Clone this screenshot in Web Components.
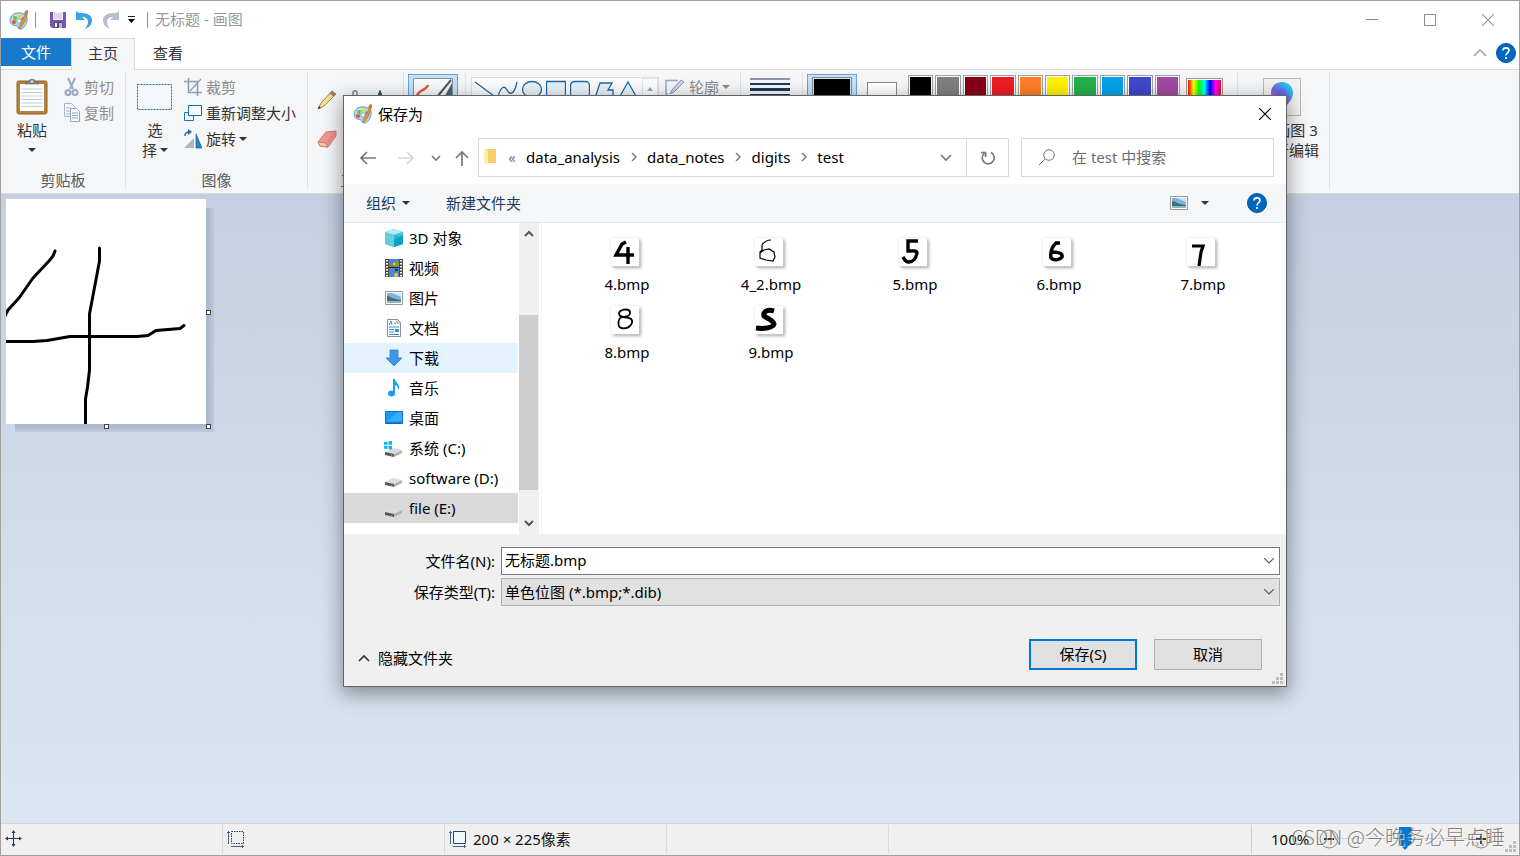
<!DOCTYPE html>
<html lang="zh-CN">
<head>
<meta charset="utf-8">
<title>无标题 - 画图</title>
<style>
  html, body { margin: 0; height: 100%; }
  body { font: 15px/20px "Noto Sans", "Noto Sans CJK SC", sans-serif; color: #000; overflow: hidden; }
</style>
</head>
<body>
<paint-app></paint-app>
<script>
const RESET = `
  *, *::before, *::after { box-sizing: border-box; }
  button, input, select { font: inherit; color: inherit; margin: 0; }
  button { background: none; border: 0; padding: 0; display: flex; align-items: center; justify-content: center; }
  a { color: inherit; text-decoration: none; }
`;
function define(name, css, html, setup) {
  const tpl = document.createElement('template');
  tpl.innerHTML = `<style>${RESET}${css}</style>${html}`;
  customElements.define(name, class extends HTMLElement {
    constructor() {
      super();
      this.attachShadow({ mode: 'open' }).append(tpl.content.cloneNode(true));
    }
    connectedCallback() { if (setup) setup(this, this.shadowRoot); }
  });
}

const S = (w, h, body) => `<svg width="${w}" height="${h}" viewBox="0 0 ${w} ${h}" fill="none" aria-hidden="true">${body}</svg>`;
const stroke = (d, c, w, extra = '') => `<path d="${d}" stroke="${c}" stroke-width="${w}" ${extra}/>`;
const thumb = body => S(28, 28, body);
const drive = extra => S(20, 20, `<path d="M1 14 9 10l9 2-8 4z" fill="#dcdcde"/><path d="M1 14l9 2v3L1 17z" fill="#55575a"/><path d="M10 16 18 12v3l-8 4z" fill="#aeb0b3"/><path d="M7 17h1.500v1H7z" fill="#3ad13a"/>${extra}`);

const ICONS = {
  palette: S(20, 20, `<path d="M1 11C1 5 6 2 12 3c5 1 7 4 6 8-1 5-4 8-7 8-2 0-2-2-3-3-2-1-6 0-7-5z" fill="#a9d4ea" stroke="#6b9fc0"/>
    <path d="M3 10c1-4 5-6 9-5" stroke="#e4f4fb"/><circle cx="5" cy="12" r="2" fill="#e2553b"/><circle cx="6" cy="8" r="2" fill="#6fbf47"/><circle cx="10" cy="6" r="2" fill="#f4d13b"/><circle cx="10" cy="11" r="2" fill="#f4fafc" stroke="#6b9fc0" stroke-width=".6"/><circle cx="14" cy="9" r="1.500" fill="#4078c8"/>
    <path d="M10 19c0-3 2-7 6-14l2 1c-3 7-5 11-8 13z" fill="#ed9332" stroke="#b8661b" stroke-width=".6"/><path d="M15 4c0-2 2-4 3-4 2 1 1 4 0 6z" fill="#b9845a"/>`),
  save: S(16, 16, `<path d="M0 0h16v16H2l-2-2z" fill="#7a54b8"/><path d="M3 0h10v8H3z" fill="#f1eef8"/><path d="M4 2h8M4 4h8M4 6h8" stroke="#c8bfde"/><path d="M4 10h8v6H4z" fill="#4d4d66"/><path d="M5 11h2v4H5z" fill="#fff"/><path d="M9 11h3v5H9z" fill="#b9b3cc"/>`),
  undo: S(18, 18, `<path d="M1 0v9h9L7 6c4 0 6 2 6 5 0 2-1 4-3 7 5-2 7-5 7-9 0-4-4-7-10-7H4z" fill="#36a5e4"/>`),
  redo: S(18, 18, `<path d="M17 0v9H8l3-3c-4 0-6 2-6 5 0 2 1 4 3 7-5-2-7-5-7-9 0-4 4-7 10-7h3z" fill="#b3bfd3"/>`),
  qat: S(7, 7, `<path d="M0 .500h7" stroke="#222"/><path d="M0 3h7L3.500 7z" fill="#000"/>`),
  min: S(12, 12, stroke('M0 5.500h12', '#8c8c8c', 1)),
  max: S(12, 12, `<path d="M.500.500h11v11H.500z" stroke="#8c8c8c"/>`),
  close: S(12, 12, stroke('M0 0l12 12M12 0 0 12', 'currentColor', 1.2)),
  up: S(14, 8, stroke('M1 7l6-6 6 6', '#9a9a9a', 1.4)),
  help: S(20, 20, `<circle cx="10" cy="10" r="9.500" fill="#0067c5" stroke="#0a4f92"/><path d="M7 7.500C7 4 13 4 13 7.500c0 2-3 2.200-3 5M10 14v2" stroke="#fff" stroke-width="1.700"/>`),
  caret: S(8, 4, `<path d="M0 0h8L4 4z" fill="currentColor"/>`),
  paste: S(32, 36, `<rect x="1" y="2" width="30" height="33" rx="2" fill="#b98039" stroke="#8f5f27"/><path d="M4 5h24v27H4z" fill="#fff"/><path d="M5 10h22M5 13.500h22M5 17h22M5 20.500h22M5 24h22M5 27.500h22" stroke="#b9cfe2"/><path d="M9 5c0-2 4-1 4-3 1-3 5-3 6 0 0 2 4 1 4 3z" fill="#8b8e92" stroke="#606266" stroke-width=".7"/><circle cx="16" cy="2.500" r="1" fill="#fff"/>`),
  cut: S(16, 20, `<path d="M4 1l5 11M11 1 6 12" stroke="#9aa9bf" stroke-width="2"/><circle cx="4" cy="15.500" r="2.500" stroke="#9aa9bf" stroke-width="2"/><circle cx="11" cy="15.500" r="2.500" stroke="#9aa9bf" stroke-width="2"/>`),
  copy: S(16, 20, `<path d="M.500.500h7l3 3v10H.500z" fill="#f3f6fa" stroke="#a3b2c8"/><path d="M2 5h5M2 8h5M2 11h4" stroke="#a3b2c8"/><path d="M6.500 5.500h6l3 3v10h-9z" fill="#f3f6fa" stroke="#93a5bf"/><path d="M8 10h6M8 12.500h6M8 15h6" stroke="#93a5bf"/>`),
  select: S(36, 36, `<rect x=".5" y="5.500" width="34" height="25" fill="#f3f6fa" stroke="#1f6aa5" stroke-dasharray="2 1"/>`),
  crop: S(18, 20, `<path d="M4.500 1v14.500H18M0 4.500h13.500V19" stroke="#8f9db5" stroke-width="1.600"/><path d="M6 14 17 2" stroke="#8f9db5" stroke-width="1.300"/>`),
  resize: S(18, 18, `<path d="M.500 8.500h9v8h-9z" fill="#eaf4fb" stroke="#2273ae"/><path d="M4.500 1.500h13v10h-13z" fill="#f2f8fc" stroke="#1a6aa8"/>`),
  rotate: S(18, 20, `<path d="M0 19h10V9z" fill="#b4b6b8"/><path d="M12 5l6 14h-6z" fill="#2a83c0" stroke="#1f6394" stroke-width=".7"/><path d="M1 7c0-3 2-4 4-4" stroke="#1c6fb4" stroke-width="1.500"/><path d="M4 0l4 3-4 3z" fill="#1c6fb4"/>`),
  pencil: S(20, 20, `<path d="M1 19l3-6L15 1l4 3L7 16z" fill="#f7e08e" stroke="#77694a" stroke-width=".8"/><path d="M15 1l4 3-2 2-4-3z" fill="#d86262"/><path d="M13 3l4 3" stroke="#5f9b76" stroke-width="1.500"/><path d="M1 19l1-3 2 2z" fill="#333"/>`),
  eraser: S(20, 18, `<path d="M1 12 9 2l10-1v5l-8 11-8-1z" fill="#f0958f" stroke="#d87a73"/><path d="M1 12l8 1 2 4-8-1z" fill="#f8c4ae" stroke="#c7846f"/><path d="M9 13 19 2" stroke="#e0837c"/>`),
  fill: S(16, 20, `<path d="M8 9V3c0-3 4-3 4 0v8" stroke="#7d8896" stroke-width="1.500"/><path d="M1 14 9 6l6 7-7 6z" fill="#d7e2ed" stroke="#6f7f92"/>`),
  textTool: S(14, 18, `<path d="M1 17 7 2l6 15M3 12h8" stroke="#234b77" stroke-width="2"/>`),
  brush: S(40, 40, `<path d="M.500.500h39v39H.500z" fill="#f6fafc" stroke="#8a8f94"/><path d="M39 5v34H20z" fill="#2e4566" opacity=".85"/><path d="M3 24C3 10 13 14 15 7" stroke="#e0592b" stroke-width="2.500"/><path d="M38 2 24 19" stroke="#555" stroke-width="2"/>`),
  line: S(20, 20, stroke('M1 2l19 14', '#1f6aa5', 1.3)),
  curve: S(20, 20, stroke('M0 17C3 5 7 6 9 10s7 7 10-8', '#1f6aa5', 1.3)),
  ellipse: S(20, 20, `<ellipse cx="10" cy="9.500" rx="9.500" ry="8" fill="#e6f1f8" stroke="#1f6aa5" stroke-width="1.300"/>`),
  rect: S(20, 20, `<path d="M.500 1.500h19v16H.500z" fill="#e6f1f8" stroke="#1f6aa5" stroke-width="1.300"/>`),
  rrect: S(20, 20, `<rect x=".5" y="1.500" width="19" height="16" rx="4" fill="#e6f1f8" stroke="#1f6aa5" stroke-width="1.300"/>`),
  poly: S(20, 20, `<path d="M1 18 6 3h12l-4 7h5v8z" fill="#e6f1f8" stroke="#1f6aa5" stroke-width="1.300"/>`),
  tri: S(20, 20, `<path d="M1 18 10 2l9 16z" fill="#e6f1f8" stroke="#1f6aa5" stroke-width="1.300"/>`),
  triUp: S(6, 4, `<path d="M0 4h6L3 0z" fill="#a5a5a5"/>`),
  outline: S(20, 18, `<path d="M1 17V2.500h12M1 16h2" stroke="#98a8c2" stroke-width="1.500"/><path d="M5 16 7 12 16 2l3 2L9 14z" fill="#c9d5e8" stroke="#8497b7"/>`),
  sizes: S(40, 26, `<path d="M0 1h40" stroke="#1e395b"/><path d="M0 6h40" stroke="#1e395b" stroke-width="2"/><path d="M0 11.500h40" stroke="#1e395b" stroke-width="3"/><path d="M0 18h40" stroke="#1e395b" stroke-width="4"/>`),
  balloon: S(24, 30, `<defs><linearGradient id="b" x1="0" y1="1" x2=".8" y2="0"><stop offset="0" stop-color="#f05ac0"/><stop offset=".5" stop-color="#7a5be0"/><stop offset="1" stop-color="#19d8f2"/></linearGradient></defs><path d="M12 1c7 0 11 5 11 11 0 7-5 9-8 16h-5C8 22 1 19 1 12 1 6 5 1 12 1z" fill="url(#b)"/><circle cx="12" cy="12" r="5" fill="#4b5ad8" opacity=".3"/>`),
  back: S(16, 14, stroke('M16 7H1M7 1 1 7l6 6', '#777', 1.7)),
  forward: S(16, 14, stroke('M0 7h15M9 1l6 6-6 6', '#d6d6d6', 1.7)),
  down: S(10, 6, stroke('M1 1l4 4 4-4', '#777', 1.7)),
  upArrow: S(14, 16, stroke('M7 16V2M1 8l6-6 6 6', '#777', 1.7)),
  chev: S(6, 10, stroke('M1 1l4 4-4 4', '#777', 1.4)),
  bigDown: S(12, 8, stroke('M1 1l5 5 5-5', '#777', 1.7)),
  thinDown: S(10, 6, stroke('M0 0l5 5 5-5', '#555', 1.1)),
  refresh: S(16, 16, stroke('M11 2.500A6 6 0 1 1 4 3.500M1 2.500h4.500V7', '#777', 1.7)),
  search: S(16, 16, `<circle cx="10" cy="6" r="5.300" stroke="#777"/><path d="M6 10l-6 6" stroke="#777"/>`),
  folder: S(12, 18, `<path d="M0 1h3v16l-3-2z" fill="#fbe7a2"/><path d="M3 1h9v14H3z" fill="#f7cf68"/><path d="M0 2l4 1v14l-4-2z" fill="#fdeeb6"/>`),
  picture: S(20, 20, `<path d="M1.500 3.500h17v13h-17z" fill="#fff" stroke="#979797"/><path d="M3 5h14v10H3z" fill="#7bb3ea"/><path d="M8 5h9v4z" fill="#cfe4f8"/><path d="M3 8c3 0 5 3 14 4v3H3z" fill="#47705e"/><path d="M3 13h14v2H3z" fill="#8fb5cc"/>`),
  cube: S(20, 20, `<path d="M10 1l9 3v12l-9 3-9-3V4z" fill="#29b6d6"/><path d="M1 4l9 3v12l-9-3z" fill="#63cde0"/><path d="M1 4l9-3 9 3-9 3z" fill="#b5ebf3"/><path d="M10 7l9-3v6z" fill="#3fc4dc"/><path d="M10 12l9-5v9l-9 3z" fill="#0ca0c4"/>`),
  video: S(20, 20, `<path d="M1 1h18v18H1z" fill="#4a4a4a"/><path d="M5 1h10v18H5z" fill="#4a86d8"/><path d="M5 9.500h10" stroke="#222"/><path d="M3 2v17M17 2v17" stroke="#fff" stroke-width="2" stroke-dasharray="1.500 1.500"/><circle cx="12" cy="6" r="3" fill="#8a9d2f"/><path d="M6 7h3v2H6z" fill="#e0572d"/><path d="M9 5h2v2H9z" fill="#f3d13b"/><circle cx="12" cy="17" r="2" fill="#f3c52e"/><path d="M11 11h3v2h-3z" fill="#273a33"/>`),
  doc: S(20, 20, `<path d="M3.500 1.500h10l3 3v14h-13z" fill="#fff" stroke="#8b8f93"/><path d="M13 1v4h4" stroke="#8b8f93"/><path d="M5 7l2-4 1 4M10 5h2M5 9h10M5 11.500h5M5 14h5M5 16.500h10" stroke="#2f8fcb"/><path d="M11 11h4v3h-4z" fill="#4b93b6"/>`),
  download: S(20, 20, `<path d="M6 2h8v8h4l-8 8-8-8h4z" fill="#3c9ae8" stroke="#2f7fca" stroke-width=".8"/>`),
  music: S(20, 20, `<ellipse cx="7.500" cy="15.500" rx="3.500" ry="3" fill="#1a9cf0"/><path d="M9 16V1h2c0 4 5 4 4 10h-1c0-3-2-4-3-4v9z" fill="#1a9cf0"/>`),
  desktop: S(20, 20, `<path d="M1.500 3.500h17v12h-17z" fill="#149bfb" stroke="#0a6fc2"/><path d="M2 14 14 4h4v9H9z" fill="#46b3ff" opacity=".7"/><path d="M2 15h16" stroke="#0c5c9e" stroke-dasharray="3 1"/>`),
  sys: drive('<path d="M0 4l3.500-.500v3.300H0zM4.500 3.300 8 3v3.800H4.500zM0 7.800h3.500V11L0 10.500zM4.500 7.800H8v3.700l-3.500-.300z" fill="#11b5ee"/>'),
  drive: drive(''),
  sbUp: S(10, 8, stroke('M1 6l4-4 4 4', '#555', 2)),
  sbDown: S(10, 8, stroke('M1 2l4 4 4-4', '#555', 2)),
  hide: S(12, 8, stroke('M1 7l5-5 5 5', '#333', 1.7)),
  grip: S(12, 12, `<path d="M8 0h3v3H8zM4 4h3v3H4zM8 4h3v3H8zM0 8h3v3H0zM4 8h3v3H4zM8 8h3v3H8z" fill="#bdbdbd"/>`),
  move: S(18, 18, `<path d="M8.500 2v13M2 8.500h13" stroke="#1e395b"/><path d="M8.500 0l2 3h-4zM8.500 17l2-3h-4zM0 8.500l3-2v4zM17 8.500l-3-2v4z" fill="#1e395b"/>`),
  selSize: S(18, 18, `<path d="M4.500 1.500h12v12h-12z" stroke="#1e395b" stroke-dasharray="1.500 1"/><path d="M1.500 1v13M4 16.500h13M0 2.500h3M15.500 15v3" stroke="#48617f"/>`),
  imgSize: S(18, 18, `<path d="M4.500 1.500h12v12h-12z" fill="#eef8fb" stroke="#1e4a77"/><path d="M1.500 1v13M4 16.500h13M0 2.500h3M15.500 15v3" stroke="#48617f"/>`),
  minus: S(20, 20, `<circle cx="10" cy="10" r="9" fill="#e9e9e9" stroke="#8b8b8b"/><path d="M5 10h10" stroke="#333" stroke-width="2"/>`),
  plus: S(20, 20, `<circle cx="10" cy="10" r="9" fill="#e9e9e9" stroke="#8b8b8b"/><path d="M5 10h10M10 5v10" stroke="#333" stroke-width="2"/>`),
  t4: thumb(stroke('M15 4 11 6 5 17h18M17 9v17', '#000', 3.4)),
  t42: thumb(stroke('M16 2c-4 0-7 2-9 5v5l-2 2v6l6 2 7 1 2-4-1-5-5-3-5 1-4 3', '#000', 1.2)),
  t5: thumb(stroke('M19 3H9v10c3 0 9-1 9 2-1 5-4 9-8 9-4 0-4-2-6-5', '#000', 3.4)),
  t6: thumb(stroke('M17 5h-4c-4 4-6 9-5 15 3 3 9 2 11-1 1-4-4-5-11-5', '#000', 3.4)),
  t7: thumb(stroke('M5 8h11l-2 6-2 14', '#000', 3.2)),
  t8: thumb(stroke('M8 8c0-5 10-6 11-2 1 6-10 6-11 2M11 11c-4 1-5 9-1 11 9 2 13-6 10-9-3-2-6-2-9-2', '#000', 1.8)),
  t9: thumb(stroke('M19 5C12 3 8 6 9 10c4 3 9 4 10 8-1 4-10 5-18 4', '#000', 5)),
};
define('ui-icon', ':host{display:block;flex:none} svg{display:block}', '<span></span>', (el, root) => {
  root.querySelector('span').innerHTML = ICONS[el.getAttribute('name')];
});

define('title-bar', `
  :host { display: flex; align-items: center; height: 37px; background: #fff; color: #999; padding: 0 2px 0 8px; }
  .quick { display: flex; align-items: center; flex: 1; }
  .sep { width: 1px; height: 16px; background: #8f8f8f; }
  .s1 { margin: 0 14px 0 6px; } .s2 { margin: 0 7px 0 12px; }
  .undo { margin: 0 9px; }
  .qat { margin-left: 8px; }
  .win { width: 58px; height: 36px; }
  h1 { font: inherit; margin: 0; padding-bottom: 2px; }
`, `<div class="quick"><ui-icon name="palette"></ui-icon><i class="sep s1"></i>
  <button aria-label="保存"><ui-icon name="save"></ui-icon></button>
  <button class="undo" aria-label="撤消"><ui-icon name="undo"></ui-icon></button>
  <button aria-label="重做"><ui-icon name="redo"></ui-icon></button>
  <button class="qat" aria-label="自定义"><ui-icon name="qat"></ui-icon></button><i class="sep s2"></i><h1>无标题 - 画图</h1></div>
  <button class="win" aria-label="最小化"><ui-icon name="min"></ui-icon></button>
  <button class="win" aria-label="最大化"><ui-icon name="max"></ui-icon></button>
  <button class="win" aria-label="关闭"><ui-icon name="close"></ui-icon></button>`);

define('ribbon-tabs', `
  :host { display: flex; height: 32px; background: #fff; border-bottom: 1px solid #dadbdc; color: #333; }
  .file { width: 70px; height: 28px; background: #1979ca; color: #fff; }
  .tab { width: 66px; height: 30px; }
  .on { width: 64px; height: 32px; background: #f5f6f7; border: 1px solid #dadbdc; border-bottom: 0; padding-bottom: 4px; }
  .end { margin-left: auto; display: flex; align-items: center; gap: 9px; padding: 0 3px 2px 0; }
`, `<button class="file">文件</button><button class="tab on">主页</button><button class="tab">查看</button>
  <div class="end"><button aria-label="折叠功能区"><ui-icon name="up"></ui-icon></button><button aria-label="帮助"><ui-icon name="help"></ui-icon></button></div>`);

define('ribbon-group', `
  :host { display: flex; flex-direction: column; flex: none; height: 118px; border-right: 1px solid #e2e3e4; margin-top: 2px; }
  .body { display: flex; flex: 1; }
  .label { text-align: center; color: #5a5a5a; height: 20px; }
`, `<div class="body"><slot></slot></div><div class="label"></div>`, (el, root) => {
  root.querySelector('.label').textContent = el.getAttribute('label') || '';
});

define('tool-button', `
  :host { display: block; color: #333; }
  button { height: 26px; gap: 4px; justify-content: flex-start; white-space: nowrap; }
  :host([disabled]) button { color: #8d8d8d; }
  :host([big]) button { flex-direction: column; height: auto; gap: 0; padding-top: 7px; width: 100%; }
  :host([big]) ui-icon { margin-bottom: 5px; }
`, `<button><slot></slot></button>`, (el, root) => {
  const icon = document.createElement('ui-icon');
  icon.setAttribute('name', el.getAttribute('icon'));
  const button = root.querySelector('button');
  button.prepend(icon);
  button.disabled = el.hasAttribute('disabled');
});

define('color-swatch', `
  :host { display: block; }
  button { width: 100%; height: 25px; border: 1px solid #a0a0a0; padding: 1px; background: #fff; }
  i { flex: 1; height: 100%; background: var(--swatch); }
`, `<button aria-label="颜色"><i></i></button>`, (el) => {
  el.style.setProperty('--swatch', el.getAttribute('color'));
});

define('paint-ribbon', `
  :host { display: flex; height: 124px; background: #f5f6f7; border-bottom: 1px solid #dadbdc; overflow: hidden; }
  .clip { width: 125px; } .image { width: 182px; } .tools { width: 96px; } .brushes, .size { width: 62px; }
  .shapes { width: 275px; } .colors { width: 435px; } .p3d { width: 92px; }
  .paste { width: 46px; margin: 0 9px 0 8px; }
  .select { width: 58px; }
  .col { padding-top: 2px; display: flex; flex-direction: column; align-items: flex-start; }
  .row { display: flex; align-items: center; height: 20px; gap: 3px; }
  .drop { height: 20px; display: flex; align-items: center; }
  .grid { display: grid; grid-template-columns: 20px 20px 20px; gap: 20px 8px; padding: 18px 0 0 9px; align-content: start; }
  .brush { width: 50px; height: 90px; margin: 2px 4px; border: 1px solid #62a2e4; background: #c9e0f7; align-items: flex-start; padding-top: 3px; }
  .gallery { display: flex; gap: 4px; margin: 5px 0 0 5px; border: 1px solid #dcdddf; height: 74px; padding: 2px; background: #fafbfc; width: 188px; flex: none; }
  .scroll { width: 17px; height: 22px; margin: -2px -2px 0 auto; border: 1px solid #e4e5e7; }
  .outline { margin-left: 6px; padding-top: 2px; }
  .lines { margin: 6px 0 0 9px; align-items: flex-start; height: 40px; }
  .c1 { width: 50px; height: 90px; margin: 2px 0 0 4px; border: 1px solid #62a2e4; background: #c9e0f7; align-items: flex-start; padding-top: 2px; }
  .c1 i { width: 40px; height: 40px; background: #000; border: 1px solid #8a8a8a; box-shadow: inset 0 0 0 1px #c9e0f7; }
  .c2 { width: 30px; height: 30px; margin: 10px 0 0 10px; border: 1px solid #8a8a8a; background: #fff; }
  .swatches { display: grid; grid-template-columns: repeat(10, 1fr); gap: 2px; width: 272px; margin: 3px 6px 0 11px; align-content: start; }
  .rainbow { width: 37px; height: 36px; margin: 6px 0 0; border: 1px solid #999; padding: 1px; background: #fff; }
  .rainbow i { flex: 1; height: 100%; background: linear-gradient(90deg, #f00, #ff0, #0f0, #0ff, #00f, #f0f, #f03); }
  .b3 { flex: 1; flex-direction: column; justify-content: flex-start; align-items: center; padding: 6px 8px 0 4px; color: #333; white-space: nowrap; }
  .box { border: 1px solid #b8b8b8; width: 38px; height: 38px; display: grid; place-items: start center; padding: 2px; margin-bottom: 4px; background: #f2f2f2; }
`, `
  <ribbon-group class="clip" label="剪贴板">
    <tool-button big class="paste" icon="paste"><span>粘贴</span><span class="drop"><ui-icon name="caret"></ui-icon></span></tool-button>
    <div class="col"><tool-button icon="cut" disabled>剪切</tool-button><tool-button icon="copy" disabled>复制</tool-button></div>
  </ribbon-group>
  <ribbon-group class="image" label="图像">
    <tool-button big class="select" icon="select"><span>选</span><span class="row">择<ui-icon name="caret"></ui-icon></span></tool-button>
    <div class="col"><tool-button icon="crop" disabled>裁剪</tool-button><tool-button icon="resize">重新调整大小</tool-button><tool-button icon="rotate"><span class="row">旋转<ui-icon name="caret"></ui-icon></span></tool-button></div>
  </ribbon-group>
  <ribbon-group class="tools" label="工具"><div class="grid">
    <ui-icon name="pencil"></ui-icon><ui-icon name="fill"></ui-icon><ui-icon name="textTool"></ui-icon><ui-icon name="eraser"></ui-icon></div></ribbon-group>
  <ribbon-group class="brushes"><button class="brush" aria-label="刷子"><ui-icon name="brush"></ui-icon></button></ribbon-group>
  <ribbon-group class="shapes">
    <div class="gallery"><ui-icon name="line"></ui-icon><ui-icon name="curve"></ui-icon><ui-icon name="ellipse"></ui-icon><ui-icon name="rect"></ui-icon><ui-icon name="rrect"></ui-icon><ui-icon name="poly"></ui-icon><ui-icon name="tri"></ui-icon>
    <button class="scroll" aria-label="向上"><ui-icon name="triUp"></ui-icon></button></div>
    <tool-button class="outline" icon="outline" disabled><span class="row">轮廓<ui-icon name="caret"></ui-icon></span></tool-button>
  </ribbon-group>
  <ribbon-group class="size"><button class="lines" aria-label="粗细"><ui-icon name="sizes"></ui-icon></button></ribbon-group>
  <ribbon-group class="colors">
    <button class="c1" aria-label="颜色 1"><i></i></button><button class="c2" aria-label="颜色 2"></button>
    <div class="swatches">${['#000','#7f7f7f','#880015','#ed1c24','#ff7f27','#fff200','#22b14c','#00a2e8','#3f48cc','#a349a4'].map(c => `<color-swatch color="${c}"></color-swatch>`).join('')}</div>
    <button class="rainbow" aria-label="编辑颜色"><i></i></button>
  </ribbon-group>
  <ribbon-group class="p3d"><button class="b3"><span class="box"><ui-icon name="balloon"></ui-icon></span><span>使用画图 3</span><span>D 重新编辑</span></button></ribbon-group>`);

define('paint-canvas', `
  :host { display: block; flex: 1; min-height: 0; padding: 5px; background: linear-gradient(#c5cfe1, #dce6f2); }
  .stage { position: relative; z-index: 0; width: 200px; height: 225px; }
  .stage::before { content: ""; position: absolute; z-index: -1; inset: 9px -8px -8px 9px; background: #abb9cd; box-shadow: inset -3px -3px 4px #c0cbdd; }
  i { position: absolute; width: 5px; height: 5px; background: #fff; border: 1px solid #444; }
  .e { left: 200px; top: 111px; } .s { left: 98px; top: 225px; } .se { left: 200px; top: 225px; }
  svg { display: block; background: #fff; }
`, `<div class="stage"><svg width="200" height="225" viewBox="0 0 200 225" fill="none" stroke="#000" stroke-width="3" stroke-linecap="round" stroke-linejoin="round">
    <path d="M49 52l-2 5-4 5-16 17-14 20-11 12-3 6"/><path d="M93.500 49v13L83.500 115v56l-2 17-2 12v27"/><path d="M-2 142.500h29l14-1 23-4h67l11-1 8-5 24-2 4-3"/></svg>
    <i class="e"></i><i class="s"></i><i class="se"></i></div>`);

define('status-bar', `
  :host { display: flex; align-items: stretch; height: 32px; background: #f0f0f0; border-top: 1px solid #d5d5d5; color: #111; position: relative; }
  .cell { width: 222px; border-right: 1px solid #dadada; display: flex; align-items: center; gap: 6px; padding: 0 5px 2px 4px; margin: 1px 0; }
  .spacer { flex: 1; border-right: 1px solid #d0d0d0; margin: 1px 0; }
  .zoom { width: 267px; display: flex; align-items: center; padding: 0 0 2px 19px; }
  .zoom output { width: 48px; }
  input { appearance: none; width: 132px; height: 24px; background: linear-gradient(#d2d2d2, #d2d2d2) center / 100% 1px no-repeat; }
  input::-webkit-slider-thumb { appearance: none; width: 13px; height: 23px; background: #0078d7; clip-path: polygon(0 0, 100% 0, 100% 70%, 50% 100%, 0 70%); }
  .grip { position: absolute; right: 2px; bottom: 2px; }
  .mark { position: absolute; right: 14px; bottom: 4px; font: 20px/28px "Noto Sans CJK SC", sans-serif; font-weight: 300; color: rgba(110,110,110,.85); text-shadow: 1px 1px 0 rgba(255,255,255,.6); white-space: nowrap; }
`, `<div class="cell"><ui-icon name="move"></ui-icon></div>
  <div class="cell"><ui-icon name="selSize"></ui-icon></div>
  <div class="cell"><ui-icon name="imgSize"></ui-icon><span>200 × 225像素</span></div>
  <div class="cell"></div><div class="spacer"></div>
  <div class="zoom"><output>100%</output><button aria-label="缩小"><ui-icon name="minus"></ui-icon></button><input type="range" aria-label="缩放" value="50"><button aria-label="放大"><ui-icon name="plus"></ui-icon></button></div>
  <ui-icon class="grip" name="grip"></ui-icon><div class="mark">CSDN @今晚务必早点睡</div>`);

define('nav-item', `
  :host { display: block; }
  a { display: flex; align-items: center; gap: 5px; height: 30px; padding-left: 40px; white-space: nowrap; }
  :host([hover]) a { background: #e5f3ff; } :host([selected]) a { background: #d9d9d9; }
`, `<a href="#"><slot name="icon"></slot><slot></slot></a>`);

define('file-item', `
  :host { display: flex; flex-direction: column; align-items: center; height: 57px; }
  .pic { width: 28px; height: 28px; margin: 0 4px 8px 0; background: #fff; box-shadow: 0 0 2px #e4e4e4, 2px 2px 3px #aaa; }
`, `<div class="pic"><slot name="thumb"></slot></div><slot></slot>`);

define('address-bar', `
  :host { display: flex; flex: 1; height: 39px; border: 1px solid #d9d9d9; background: #fff; }
  nav { display: flex; align-items: center; flex: 1; padding: 0 0 2px 5px; }
  .more { width: 30px; text-align: center; color: #777; padding-left: 2px; }
  nav button { width: 27px; height: 35px; }
  .drop { width: 40px; } .re { width: 42px; border-left: 1px solid #d9d9d9; }
`, `<nav aria-label="路径"><ui-icon name="folder"></ui-icon><span class="more">«</span>
  <a href="#">data_analysis</a><button aria-label="展开"><ui-icon name="chev"></ui-icon></button>
  <a href="#">data_notes</a><button aria-label="展开"><ui-icon name="chev"></ui-icon></button>
  <a href="#">digits</a><button aria-label="展开"><ui-icon name="chev"></ui-icon></button><a href="#">test</a></nav>
  <button class="drop" aria-label="历史"><ui-icon name="bigDown"></ui-icon></button><button class="re" aria-label="刷新"><ui-icon name="refresh"></ui-icon></button>`);

define('save-dialog', `
  :host { display: flex; flex-direction: column; background: #fff; border: 1px solid #5f6266; box-shadow: 0 6px 18px 2px rgba(0,0,0,.36); }
  header { display: flex; align-items: center; height: 38px; padding: 0 0 2px 9px; gap: 5px; }
  h2 { font: inherit; margin: 0; flex: 1; }
  header button { width: 43px; height: 36px; }
  .nav { display: flex; align-items: flex-start; padding: 4px 12px 7px 5px; }
  .nav > button { height: 39px; width: 38px; } .nav > .rec { width: 22px; } .nav > .par { width: 31px; padding-right: 2px; }
  .search { display: flex; align-items: center; width: 253px; height: 39px; margin-left: 12px; border: 1px solid #d9d9d9; padding: 0 0 2px 17px; gap: 17px; }
  .search input { border: 0; outline: 0; width: 180px; padding: 0; }
  .search input::placeholder { color: #6d6d6d; opacity: 1; }
  .bar { display: flex; align-items: center; height: 39px; background: #f5f6f7; border-bottom: 1px solid #e3e6ea; color: #1e395b; padding: 0 19px 0 22px; }
  .bar button { gap: 6px; } .bar .new { margin-left: 36px; } .bar .view { margin-left: auto; gap: 12px; } .bar .help { margin-left: 38px; }
  .main { display: flex; height: 311px; }
  .tree { width: 174px; }
  .scrollbar { width: 20px; margin-left: 1px; background: #f0f0f0; display: flex; flex-direction: column; }
  .scrollbar button { height: 22px; width: 19px; } .track { flex: 1; padding-top: 70px; }
  .track i { display: block; width: 19px; height: 175px; background: #cdcdcd; }
  .files { flex: 1; margin-left: 2px; border-left: 1px solid #f4f4f4; display: grid; grid-template-columns: repeat(auto-fill, 144px); gap: 11px 0; align-content: start; padding: 15px 0 0 13px; }
  footer { position: relative; background: #f0f0f0; flex: 1; padding: 13px 6px 16px 0; }
  .form { display: grid; grid-template-columns: 151px 1fr; gap: 3px 6px; align-items: center; }
  label { text-align: right; }
  .field { display: flex; align-items: center; height: 28px; border: 1px solid #7a7a7a; background: #fff; padding-right: 5px; }
  .field.type { background: #e1e1e1; border-color: #adadad; }
  .field input, .field select { appearance: none; flex: 1; min-width: 0; border: 0; outline: 0; background: none; padding: 0 3px; height: 26px; }
  .field input { padding-bottom: 3px; }
  .actions { display: flex; margin-top: 33px; padding-right: 18px; gap: 17px; }
  .hide { align-self: flex-end; gap: 8px; margin-right: auto; padding: 0 0 2px 14px; height: 22px; }
  .act { width: 108px; height: 31px; background: #e1e1e1; border: 1px solid #adadad; padding-bottom: 2px; }
  .act.main-act { border: 2px solid #0078d7; }
  .grip { position: absolute; right: 2px; bottom: 1px; }
`, `<header><ui-icon name="palette"></ui-icon><h2>保存为</h2><button aria-label="关闭"><ui-icon name="close"></ui-icon></button></header>
  <div class="nav"><button aria-label="后退"><ui-icon name="back"></ui-icon></button><button aria-label="前进"><ui-icon name="forward"></ui-icon></button><button class="rec" aria-label="最近"><ui-icon name="down"></ui-icon></button><button class="par" aria-label="上移"><ui-icon name="upArrow"></ui-icon></button>
    <address-bar></address-bar><div class="search"><ui-icon name="search"></ui-icon><input aria-label="搜索" placeholder="在 test 中搜索"></div></div>
  <div class="bar"><button>组织<ui-icon name="caret"></ui-icon></button><button class="new">新建文件夹</button><button class="view" aria-label="视图"><ui-icon name="picture"></ui-icon><ui-icon name="caret"></ui-icon></button><button class="help" aria-label="帮助"><ui-icon name="help"></ui-icon></button></div>
  <div class="main"><div class="tree">${[['cube','3D 对象'],['video','视频'],['picture','图片'],['doc','文档'],['download','下载','hover'],['music','音乐'],['desktop','桌面'],['sys','系统 (C:)'],['drive','software (D:)'],['drive','file (E:)','selected']].map(([i, t, s = '']) => `<nav-item ${s}><ui-icon slot="icon" name="${i}"></ui-icon>${t}</nav-item>`).join('')}</div>
    <div class="scrollbar"><button aria-label="向上滚动"><ui-icon name="sbUp"></ui-icon></button><div class="track"><i></i></div><button aria-label="向下滚动"><ui-icon name="sbDown"></ui-icon></button></div>
    <div class="files">${[['t4','4'],['t42','4_2'],['t5','5'],['t6','6'],['t7','7'],['t8','8'],['t9','9']].map(([i, t]) => `<file-item><ui-icon slot="thumb" name="${i}"></ui-icon>${t}.bmp</file-item>`).join('')}</div></div>
  <footer><div class="form"><label for="name">文件名(N):</label><div class="field"><input id="name" value="无标题.bmp"><ui-icon name="thinDown"></ui-icon></div>
    <label for="type">保存类型(T):</label><div class="field type"><select id="type"><option>单色位图 (*.bmp;*.dib)</option></select><ui-icon name="thinDown"></ui-icon></div></div>
    <div class="actions"><button class="hide"><ui-icon name="hide"></ui-icon>隐藏文件夹</button><button class="act main-act">保存(S)</button><button class="act">取消</button></div>
    <ui-icon class="grip" name="grip"></ui-icon></footer>`);

define('paint-app', `
  :host { display: flex; flex-direction: column; height: 100vh; position: relative; border: 1px solid #a0a0a0; box-sizing: border-box; overflow: hidden; }
  save-dialog { position: absolute; left: 342px; top: 94px; width: 944px; height: 592px; box-sizing: border-box; }
  paint-ribbon, title-bar, ribbon-tabs, status-bar { flex: none; box-sizing: border-box; }
`, `<title-bar></title-bar><ribbon-tabs></ribbon-tabs><paint-ribbon></paint-ribbon><paint-canvas></paint-canvas><status-bar></status-bar><save-dialog role="dialog" aria-label="保存为"></save-dialog>`);
</script>
</body>
</html>
